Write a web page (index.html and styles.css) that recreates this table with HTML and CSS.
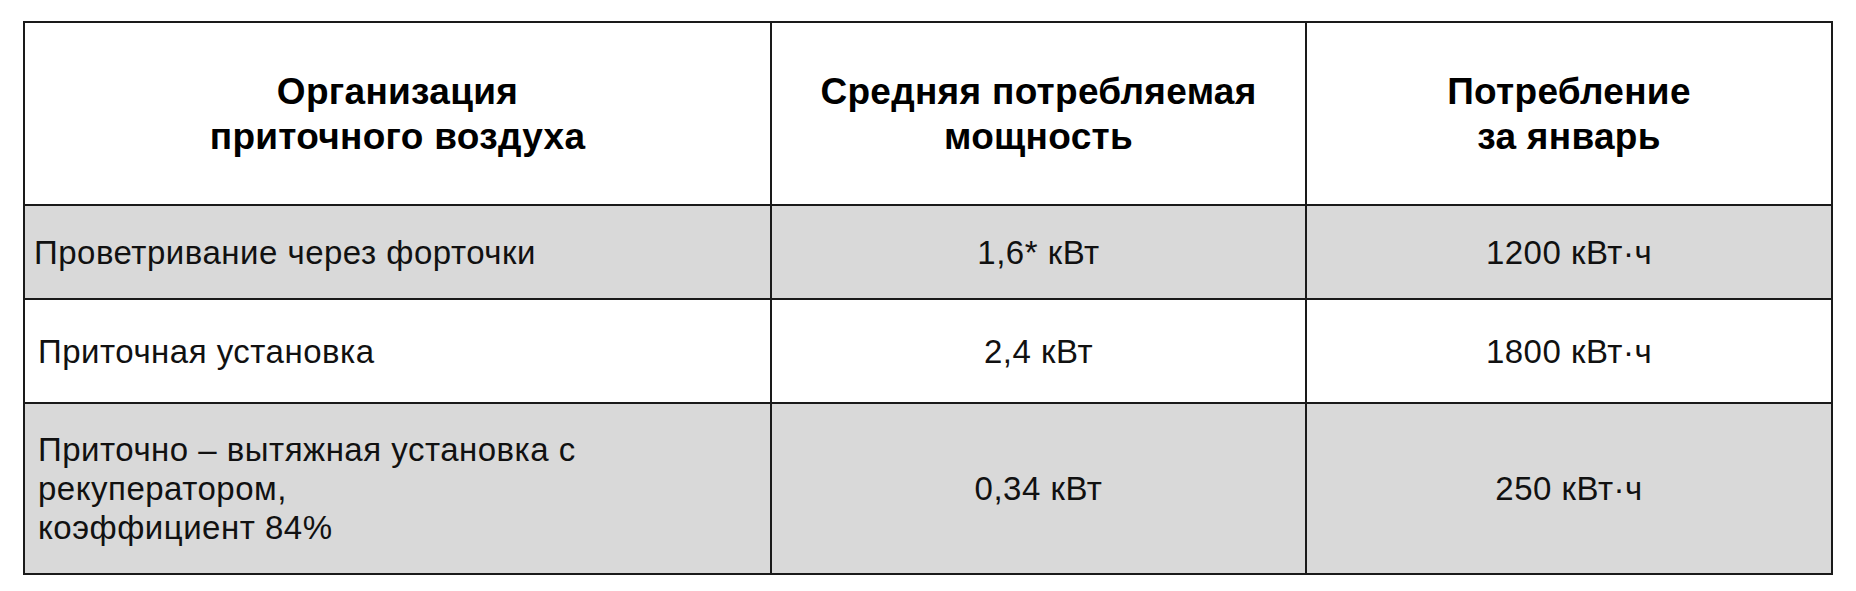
FILE: index.html
```html
<!DOCTYPE html>
<html lang="ru">
<head>
<meta charset="utf-8">
<link rel="stylesheet" href="styles.css">
</head>
<body>
<div class="page">
  <table class="energy">
    <colgroup>
      <col class="c1">
      <col class="c2">
      <col class="c3">
    </colgroup>
    <thead>
      <tr class="head">
        <th>Организация<br>приточного воздуха</th>
        <th>Средняя потребляемая<br>мощность</th>
        <th>Потребление<br>за январь</th>
      </tr>
    </thead>
    <tbody>
      <tr class="r1 shade">
        <td class="name tight">Проветривание через форточки</td>
        <td>1,6* кВт</td>
        <td>1200 кВт·ч</td>
      </tr>
      <tr class="r2">
        <td class="name">Приточная установка</td>
        <td>2,4 кВт</td>
        <td>1800 кВт·ч</td>
      </tr>
      <tr class="r3 shade">
        <td class="name">Приточно – вытяжная установка с<br>рекуператором,<br>коэффициент 84%</td>
        <td>0,34 кВт</td>
        <td>250 кВт·ч</td>
      </tr>
    </tbody>
  </table>
</div>
</body>
</html>
```

FILE: styles.css
```css
html, body {
  margin: 0;
  padding: 0;
  background: #ffffff;
}

.page {
  padding: 21px 0 0 23px;
}

.energy {
  border-collapse: collapse;
  table-layout: fixed;
  width: 1808px;
  font-family: "Liberation Sans", Arial, sans-serif;
  color: #111111;
}

.c1 { width: 747px; }
.c2 { width: 535px; }
.c3 { width: 526px; }

.energy th,
.energy td {
  border: 2px solid #1a1a1a;
  text-align: center;
  vertical-align: middle;
  padding: 0;
}

.energy th {
  font-weight: bold;
  font-size: 37px;
  line-height: 45px;
  letter-spacing: 0.3px;
  color: #000000;
}

.energy td {
  font-size: 33px;
  line-height: 39px;
  letter-spacing: 0.5px;
}

.energy td.name {
  text-align: left;
  padding-left: 13px;
}

.energy td.name.tight {
  padding-left: 9px;
}

.head { height: 183px; }
.r1 { height: 94px; }
.r2 { height: 104px; }
.r3 { height: 171px; }

.shade td {
  background: #d9d9d9;
}
```
